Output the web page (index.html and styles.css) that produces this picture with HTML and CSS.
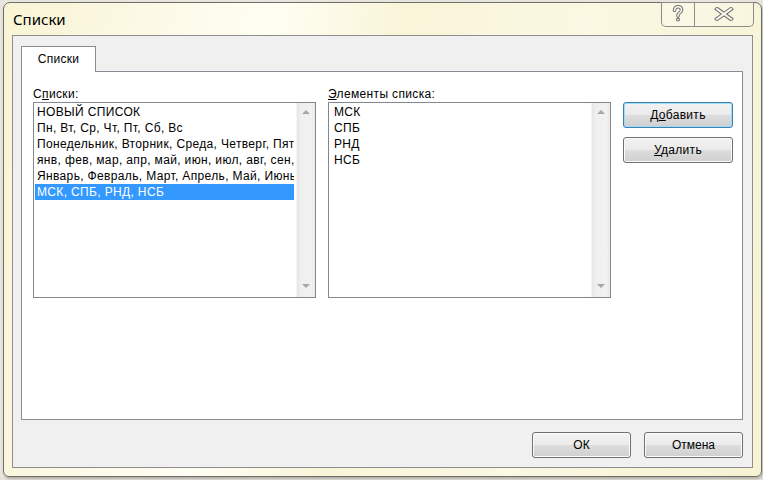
FILE: index.html
```html
<!DOCTYPE html>
<html lang="ru">
<head>
<meta charset="utf-8">
<title>Списки</title>
<link rel="stylesheet" href="styles.css">
</head>
<body>
<div class="desk">
  <div class="window">
    <div class="titlebar">
      <span class="title">Списки</span>
      <div class="caption">
        <div class="cap-btn help">
          <svg width="14" height="18" viewBox="0 0 14 18">
            <path d="M3.5 5.5 C3.5 3 5 1.8 7 1.8 C9.2 1.8 10.5 3.2 10.5 5 C10.5 7 8.8 7.6 7.8 8.5 C7.1 9.1 7 9.8 7 11" fill="none" stroke="#707070" stroke-width="3.6" stroke-linecap="round"/>
            <circle cx="7" cy="14.6" r="2" fill="#707070"/>
            <path d="M3.5 5.5 C3.5 3 5 1.8 7 1.8 C9.2 1.8 10.5 3.2 10.5 5 C10.5 7 8.8 7.6 7.8 8.5 C7.1 9.1 7 9.8 7 11" fill="none" stroke="#fbfaf0" stroke-width="1.6" stroke-linecap="round"/>
            <circle cx="7" cy="14.6" r="0.9" fill="#fbfaf0"/>
          </svg>
        </div>
        <div class="cap-btn close">
          <svg width="20" height="14" viewBox="0 0 20 14">
            <path d="M3 2 L17 12 M17 2 L3 12" fill="none" stroke="#707070" stroke-width="4" stroke-linecap="square"/>
            <path d="M3 2 L17 12 M17 2 L3 12" fill="none" stroke="#fbfaf0" stroke-width="2" stroke-linecap="square"/>
          </svg>
        </div>
      </div>
    </div>
    <div class="client">
      <div class="tabs">
        <div class="tab">Списки</div>
        <div class="tab-fill"></div>
      </div>
      <div class="panel">
        <div class="col">
          <div class="label">С<u>п</u>иски:</div>
          <div class="listbox">
            <div class="items">
              <div class="item">НОВЫЙ СПИСОК</div>
              <div class="item">Пн, Вт, Ср, Чт, Пт, Сб, Вс</div>
              <div class="item">Понедельник, Вторник, Среда, Четверг, Пятница, Суббота, Воскресенье</div>
              <div class="item">янв, фев, мар, апр, май, июн, июл, авг, сен, окт, ноя, дек</div>
              <div class="item">Январь, Февраль, Март, Апрель, Май, Июнь, Июль, Август</div>
              <div class="item sel">МСК, СПБ, РНД, НСБ</div>
            </div>
            <div class="sb">
              <div class="arrow up"></div>
              <div class="arrow down"></div>
            </div>
          </div>
        </div>
        <div class="col">
          <div class="label"><u>Э</u>лементы списка:</div>
          <div class="listbox">
            <div class="items items-edit">
              <div class="item">МСК</div>
              <div class="item">СПБ</div>
              <div class="item">РНД</div>
              <div class="item">НСБ</div>
            </div>
            <div class="sb">
              <div class="arrow up"></div>
              <div class="arrow down"></div>
            </div>
          </div>
        </div>
        <div class="side">
          <button class="btn default">Д<u>о</u>бавить</button>
          <button class="btn"><u>У</u>далить</button>
        </div>
      </div>
      <div class="footer">
        <button class="btn foot">ОК</button>
        <button class="btn foot">Отмена</button>
      </div>
    </div>
  </div>
</div>
</body>
</html>
```
FILE: styles.css
```css
* { box-sizing: border-box; margin: 0; padding: 0; }
html, body { width: 763px; height: 480px; overflow: hidden; }
body {
  background: #e8e6dc;
  font-family: "Liberation Sans", Arial, sans-serif;
  font-size: 12px;
  color: #000;
}
.desk { padding: 2px 1px 3px 3px; height: 480px; }
.window {
  width: 759px;
  height: 475px;
  border: 1px solid #6e6e6e;
  border-radius: 7px 7px 6px 6px;
  background: linear-gradient(100deg, #f8f4d4 0%, #fcf9e6 18%, #fffef3 32%, #f9f5d9 48%, #fbf8e3 70%, #f6f2d2 100%);
  padding: 0 8px 8px 8px;
  display: flex;
  flex-direction: column;
  box-shadow: 1px 2px 3px rgba(0,0,0,0.25);
}
.titlebar { height: 32px; display: flex; align-items: flex-start; }
.title {
  align-self: center;
  font-family: "Noto Sans", "Open Sans", sans-serif;
  font-size: 15px;
  color: #000;
  padding-left: 1px;
}
.caption {
  margin-left: auto;
  margin-right: -1px;
  margin-top: -1px;
  height: 25px;
  display: flex;
  border: 1px solid #8c8c8c;
  border-top: none;
  border-radius: 0 0 5px 5px;
  background: rgba(255,255,255,0.2);
}
.cap-btn { display: flex; align-items: center; justify-content: center; }
.help { width: 33px; border-right: 1px solid #8c8c8c; }
.close { width: 58px; }
.client {
  flex: 1;
  background: #f0f0f0;
  border: 1px solid #8e8e8e;
  padding: 10px 9px 9px 8px;
  display: flex;
  flex-direction: column;
}
.tabs { display: flex; height: 26px; }
.tab {
  width: 75px;
  border: 1px solid #898c95;
  border-bottom: none;
  background: #fff;
  line-height: 24px;
  text-align: center;
  letter-spacing: 0.3px;
}
.tab-fill { flex: 1; border-bottom: 1px solid #898c95; }
.panel {
  height: 348px;
  border: 1px solid #898c95;
  border-top: none;
  background: #fff;
  padding: 14px 0 0 11px;
  display: flex;
  gap: 12px;
  align-items: flex-start;
}
.col { width: 283px; }
.label { height: 16px; line-height: 16px; white-space: nowrap; letter-spacing: 0.35px; }
.listbox {
  height: 196px;
  border: 1px solid #828790;
  background: #fff;
  display: flex;
}
.items { flex: 1; padding: 1px 2px 0 1px; overflow: hidden; }
.item {
  height: 16px;
  line-height: 16px;
  padding-left: 2px;
  white-space: nowrap;
  overflow: hidden;
  letter-spacing: 0.35px;
}
.item.sel { background: #3399ff; color: #fff; }
.items-edit .item { padding-left: 4px; }
.sb {
  width: 19px;
  background: linear-gradient(90deg, #e6e6e6 0%, #efefef 20%, #f1f1f1 80%, #e9e9e9 100%);
  border-left: 1px solid #f5f5f5;
  display: flex;
  flex-direction: column;
  justify-content: space-between;
  padding: 7px 0 9px 0;
  align-items: center;
}
.arrow { width: 0; height: 0; border-left: 4px solid transparent; border-right: 4px solid transparent; }
.arrow.up { border-bottom: 4px solid #a6a6a6; }
.arrow.down { border-top: 4px solid #a6a6a6; }
.side { margin-top: 16px; display: flex; flex-direction: column; gap: 9px; }
.btn {
  width: 110px;
  height: 26px;
  border: 1px solid #707070;
  border-radius: 3px;
  background: linear-gradient(#f2f2f2 0%, #ebebeb 48%, #dddddd 52%, #cfcfcf 100%);
  box-shadow: inset 0 0 0 1px #fbfbfb;
  font-family: "Liberation Sans", Arial, sans-serif;
  font-size: 12px;
  letter-spacing: 0.3px;
  color: #000;
  text-align: center;
}
.btn.default {
  border-color: #3c7fb1;
  box-shadow: inset 0 0 0 1px #9fdcf5;
}
.footer { display: flex; justify-content: flex-end; gap: 13px; padding-top: 12px; }
.btn.foot { width: 99px; letter-spacing: 0; }
u { text-decoration: underline; text-underline-offset: 1px; }
```
